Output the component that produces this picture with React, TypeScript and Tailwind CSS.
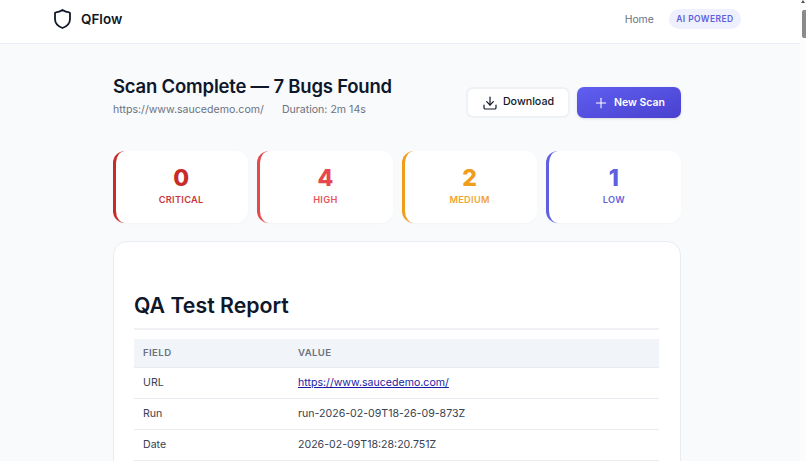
import { Download, Plus } from "lucide-react";

const stats = [
  { value: "0", label: "CRITICAL", border: "border-[#c92a2a]", num: "text-[#c92a2a]", text: "text-[#c9343a]" },
  { value: "4", label: "HIGH", border: "border-[#e5484d]", num: "text-[#e5484d]", text: "text-[#e5545a]" },
  { value: "2", label: "MEDIUM", border: "border-[#f09c1c]", num: "text-[#f09c1c]", text: "text-[#f0a52f]" },
  { value: "1", label: "LOW", border: "border-[#5f5fe0]", num: "text-[#5f5fe0]", text: "text-[#6464dc]" },
];

const rows = [
  { field: "URL", value: "https://www.saucedemo.com/", link: true },
  { field: "Run", value: "run-2026-02-09T18-26-09-873Z" },
  { field: "Date", value: "2026-02-09T18:28:20.751Z" },
];

export default function App() {
  return (
    <div className="relative h-screen overflow-hidden bg-[#f8fafc] font-['Inter',sans-serif] text-[#0f172a]">
      {/* header */}
      <header className="flex h-[44px] items-center justify-between border-b border-[#e8eef3] bg-white pr-[65px] pb-[5px] pl-[54px]">
        <div className="flex items-center gap-[10px]">
          <svg width="17" height="20" viewBox="0 0 17 20" fill="none" stroke="#111827" strokeWidth="1.8" strokeLinejoin="round">
            <path d="M8.5 1 C10.6 2.5 12.9 3.3 15.2 3.4 C15.8 3.4 16 3.7 16 4.2 L16 10 C16 14.4 13.2 17.2 8.5 19 C3.8 17.2 1 14.4 1 10 L1 4.2 C1 3.7 1.2 3.4 1.8 3.4 C4.1 3.3 6.4 2.5 8.5 1 Z" />
          </svg>
          <span className="text-[13.5px] font-semibold text-[#111827]">QFlow</span>
        </div>
        <div className="flex items-center gap-[15px]">
          <span className="mt-[1px] text-[10.4px] text-[#6b7280]">Home</span>
          <span className="flex h-[20px] items-center rounded-full bg-[#eef0fd] px-[7.5px] text-[8.5px] font-semibold tracking-[0.4px] text-[#5f5fe0]">
            AI POWERED
          </span>
        </div>
      </header>

      <main className="ml-[113px] w-[568px]">
        {/* title */}
        <div className="mt-[31px] flex items-start justify-between">
          <div>
            <h1 className="text-[18.5px] leading-[22px] font-semibold tracking-[-0.2px] text-[#0f172a]">
              Scan Complete — 7 Bugs Found
            </h1>
            <div className="mt-[5px] flex gap-[18px] text-[10.6px] leading-[16px] text-[#6b7280]">
              <span>https://www.saucedemo.com/</span>
              <span>Duration: 2m 14s</span>
            </div>
          </div>
          <div className="mt-[12px] flex gap-[7px]">
            <button className="flex h-[31px] w-[104px] items-center justify-center gap-[5px] rounded-[7px] border-2 border-[#eef1f5] bg-white text-[10.7px] font-medium text-[#111827]">
              <Download size={16} strokeWidth={1.8} />
              Download
            </button>
            <button className="flex h-[31px] w-[104px] items-center justify-center gap-[5px] rounded-[7px] bg-gradient-to-br from-[#5f5ff0] to-[#4a40cf] text-[10.5px] font-semibold text-white shadow-sm">
              <Plus size={16} strokeWidth={1.6} />
              New Scan
            </button>
          </div>
        </div>

        {/* severity cards */}
        <div className="mt-[33px] grid grid-cols-4 gap-[9px]">
          {stats.map((s) => (
            <div
              key={s.label}
              className={`flex h-[72px] flex-col items-center rounded-[12px] border-l-[3px] bg-white pt-[13px] pr-[2px] shadow-[0_1px_2px_rgba(15,23,42,0.03)] ${s.border}`}
            >
              <span className={`text-[23px] leading-[29px] font-extrabold ${s.num}`}>{s.value}</span>
              <span className={`text-[9.2px] leading-[14px] font-semibold tracking-[0.3px] ${s.text}`}>{s.label}</span>
            </div>
          ))}
        </div>

        {/* report */}
        <section className="mt-[18px] rounded-[14px] border border-[#e8ecf1] bg-white pt-[49px] pr-[21px] pb-[20px] pl-[20px]">
          <h2 className="border-b-2 border-[#eff1f4] pb-[9px] text-[21.3px] leading-[28px] font-semibold text-[#0f172a]">
            QA Test Report
          </h2>
          <table className="mt-[9px] w-full border-collapse text-left text-[10.6px] text-[#374151]">
            <thead>
              <tr className="h-[28px] bg-[#f1f4f9] text-[9.6px] font-semibold tracking-[0.4px] text-[#6b7280]">
                <th className="w-[164px] pl-[9px] font-semibold">FIELD</th>
                <th className="font-semibold">VALUE</th>
              </tr>
            </thead>
            <tbody>
              {rows.map((r) => (
                <tr key={r.field} className="h-[31px] border-t border-b border-[#e8ecf1]">
                  <td className="pl-[9px]">{r.field}</td>
                  <td>
                    {r.link ? (
                      <a href="#" className="text-[#1a1aa6] underline">
                        {r.value}
                      </a>
                    ) : (
                      r.value
                    )}
                  </td>
                </tr>
              ))}
            </tbody>
          </table>
        </section>
      </main>

      {/* scrollbar */}
      <div className="absolute inset-y-0 right-0 w-[6px] bg-[#fcfcfd]">
        <div className="mx-auto mt-[0px] h-0 w-0 border-x-[2px] border-b-[3px] border-x-transparent border-b-[#555555]" />
        <div className="mt-[7px] ml-[2px] h-[28px] w-[4px] rounded-l-[2px] bg-[#8a8a8a]" />
      </div>
    </div>
  );
}
